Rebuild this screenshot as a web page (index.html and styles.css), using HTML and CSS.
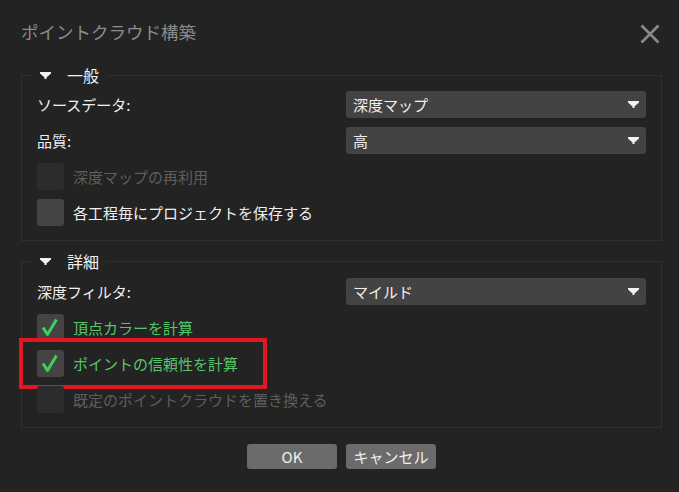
FILE: index.html
```html
<!DOCTYPE html>
<html lang="ja">
<head>
<meta charset="utf-8">
<title>ポイントクラウド構築</title>
<link rel="stylesheet" href="styles.css">
</head>
<body>
<div class="dialog">
  <header class="titlebar">
    <h1 class="title">ポイントクラウド構築</h1>
    <button class="close" aria-label="閉じる">
      <svg width="20" height="20" viewBox="0 0 20 20"><path d="M1.5 1.5 L18.5 18.5 M18.5 1.5 L1.5 18.5" stroke="#8a8a8a" stroke-width="2.6" fill="none"/></svg>
    </button>
  </header>

  <fieldset class="group">
    <legend class="legend">
      <svg class="tri" width="11" height="7" viewBox="0 0 11 7"><path d="M0 0H11V1.5L6.5 5.5V7H4.5V5.5L0 1.5Z" fill="#f2f2f2"/></svg>
      <span>一般</span>
    </legend>
    <div class="row">
      <span class="label">ソースデータ:</span>
      <div class="select"><span>深度マップ</span><svg class="arrow" width="11" height="7" viewBox="0 0 11 7"><path d="M0 0H11V1.5L6.5 5.5V7H4.5V5.5L0 1.5Z" fill="#f2f2f2"/></svg></div>
    </div>
    <div class="row">
      <span class="label">品質:</span>
      <div class="select"><span>高</span><svg class="arrow" width="11" height="7" viewBox="0 0 11 7"><path d="M0 0H11V1.5L6.5 5.5V7H4.5V5.5L0 1.5Z" fill="#f2f2f2"/></svg></div>
    </div>
    <div class="check disabled"><span class="box"></span><span>深度マップの再利用</span></div>
    <div class="check"><span class="box"></span><span>各工程毎にプロジェクトを保存する</span></div>
  </fieldset>

  <fieldset class="group second">
    <legend class="legend">
      <svg class="tri" width="11" height="7" viewBox="0 0 11 7"><path d="M0 0H11V1.5L6.5 5.5V7H4.5V5.5L0 1.5Z" fill="#f2f2f2"/></svg>
      <span>詳細</span>
    </legend>
    <div class="row">
      <span class="label">深度フィルタ:</span>
      <div class="select"><span>マイルド</span><svg class="arrow" width="11" height="7" viewBox="0 0 11 7"><path d="M0 0H11V1.5L6.5 5.5V7H4.5V5.5L0 1.5Z" fill="#f2f2f2"/></svg></div>
    </div>
    <div class="check checked">
      <span class="box"><svg width="27" height="27" viewBox="0 0 27 27"><path d="M6 13.5 L10.5 20.5 L19.5 5.5" stroke="#3ecf5c" stroke-width="3" fill="none" stroke-linejoin="round"/></svg></span>
      <span>頂点カラーを計算</span>
    </div>
    <div class="check checked highlighted">
      <span class="box"><svg width="27" height="27" viewBox="0 0 27 27"><path d="M6 13.5 L10.5 20.5 L19.5 5.5" stroke="#3ecf5c" stroke-width="3" fill="none" stroke-linejoin="round"/></svg></span>
      <span>ポイントの信頼性を計算</span>
      <span class="mark"></span>
    </div>
    <div class="check disabled"><span class="box"></span><span>既定のポイントクラウドを置き換える</span></div>
  </fieldset>

  <footer class="buttons">
    <button class="btn">OK</button>
    <button class="btn">キャンセル</button>
  </footer>
</div>
</body>
</html>
```

FILE: styles.css
```css
html, body {
  margin: 0;
  padding: 0;
  background: #232323;
}
body {
  width: 679px;
  height: 492px;
  overflow: hidden;
  font-family: "Noto Sans CJK JP", "Noto Sans", sans-serif;
  color: #f0f0f0;
}
.dialog {
  padding: 0 17px 0 21px;
}
.titlebar {
  height: 66px;
  display: flex;
  justify-content: space-between;
  align-items: flex-start;
}
.title {
  margin: 20px 0 0 0;
  font-size: 17.5px;
  line-height: 24px;
  font-weight: 400;
  color: #8c8c8c;
}
.close {
  margin: 24px 2px 0 0;
  padding: 0;
  width: 20px;
  height: 20px;
  border: 0;
  background: transparent;
  display: block;
}
.close svg { display: block; }

.group {
  margin: 0;
  border: 1px solid #303030;
  padding: 7px 15px 14px 15px;
  display: flex;
  flex-direction: column;
  gap: 9px;
  min-width: 0;
}
.group.second {
  margin-top: 11px;
  padding-top: 8px;
}
.legend {
  margin-left: -6px;
  padding: 0 8px 0 9px;
  height: 18px;
  display: flex;
  align-items: center;
  font-size: 16px;
  line-height: 18px;
  color: #f2f2f2;
}
.tri {
  display: block;
  margin-right: 16px;
}
.row {
  display: grid;
  grid-template-columns: 309px 300px;
  align-items: center;
  height: 27px;
}
.label {
  font-size: 15px;
  line-height: 27px;
}
.select {
  height: 27px;
  background: #434343;
  border-radius: 3px;
  display: flex;
  align-items: center;
  justify-content: space-between;
  padding: 0 7px;
  font-size: 15px;
  box-sizing: border-box;
}
.arrow { display: block; }

.check {
  position: relative;
  display: flex;
  align-items: center;
  gap: 9px;
  height: 27px;
  font-size: 15px;
}
.box {
  width: 27px;
  height: 27px;
  border-radius: 3px;
  background: #444444;
  display: block;
  flex: none;
}
.box svg { display: block; }
.check.disabled { color: #5e5e5e; }
.check.disabled .box { background: #2c2c2c; }
.check.checked { color: #55c66a; }

.mark {
  position: absolute;
  left: -18px;
  top: -12px;
  width: 248px;
  height: 51px;
  box-sizing: border-box;
  border: 4px solid #e2171f;
}

.buttons {
  display: flex;
  justify-content: center;
  gap: 9px;
  margin-top: 16px;
}
.btn {
  width: 90px;
  height: 25px;
  border: 0;
  border-radius: 3px;
  background: #6b6b6b;
  color: #f0f0f0;
  font-family: "Noto Sans CJK JP", "Noto Sans", sans-serif;
  font-size: 15px;
  line-height: 25px;
  padding: 0;
}
```
